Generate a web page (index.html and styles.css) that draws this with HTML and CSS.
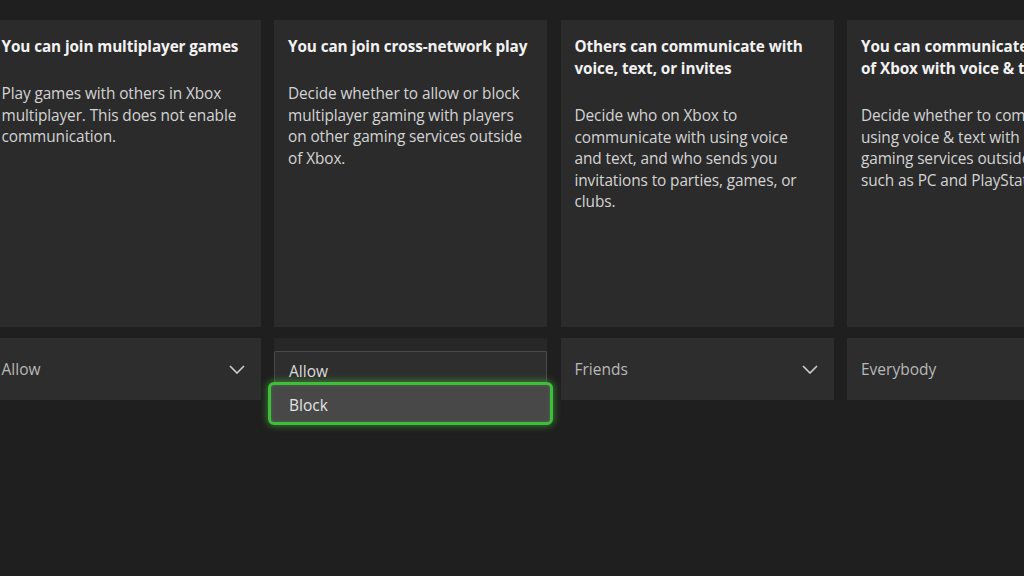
FILE: index.html
```
<!DOCTYPE html>
<html>
<head>
<meta charset="utf-8">
<link rel="stylesheet" href="styles.css">
</head>
<body>
<div class="row">
  <div class="col">
    <div class="card">
      <h2 class="title">You can join multiplayer games</h2>
      <p class="desc">Play games with others in Xbox<br>multiplayer. This does not enable<br>communication.</p>
    </div>
    <div class="select">
      <span class="value">Allow</span>
      <svg class="chev" viewBox="0 0 16 9" width="16" height="9"><path d="M1 1 L8 8 L15 1" fill="none" stroke="#cfcfcf" stroke-width="1.6"/></svg>
    </div>
  </div>
  <div class="col">
    <div class="card">
      <h2 class="title">You can join cross-network play</h2>
      <p class="desc">Decide whether to allow or block<br>multiplayer gaming with players<br>on other gaming services outside<br>of Xbox.</p>
    </div>
    <div class="select open">
      <div class="menu">
        <div class="opt">Allow</div>
        <div class="opt focused">Block</div>
      </div>
    </div>
  </div>
  <div class="col">
    <div class="card">
      <h2 class="title">Others can communicate with<br>voice, text, or invites</h2>
      <p class="desc">Decide who on Xbox to<br>communicate with using voice<br>and text, and who sends you<br>invitations to parties, games, or<br>clubs.</p>
    </div>
    <div class="select">
      <span class="value">Friends</span>
      <svg class="chev" viewBox="0 0 16 9" width="16" height="9"><path d="M1 1 L8 8 L15 1" fill="none" stroke="#cfcfcf" stroke-width="1.6"/></svg>
    </div>
  </div>
  <div class="col">
    <div class="card">
      <h2 class="title">You can communicate outside<br>of Xbox with voice &amp; text</h2>
      <p class="desc">Decide whether to communicate<br>using voice &amp; text with players on<br>gaming services outside of Xbox,<br>such as PC and PlayStation.</p>
    </div>
    <div class="select">
      <span class="value">Everybody</span>
      <svg class="chev" viewBox="0 0 16 9" width="16" height="9"><path d="M1 1 L8 8 L15 1" fill="none" stroke="#cfcfcf" stroke-width="1.6"/></svg>
    </div>
  </div>
</div>
</body>
</html>
```
FILE: styles.css
```
html, body {
  margin: 0;
  padding: 0;
  background: #1f1f1f;
  width: 1024px;
  height: 576px;
  overflow: hidden;
  font-family: "Open Sans", "Noto Sans", sans-serif;
}
.row {
  display: flex;
  gap: 13.5px;
  margin-left: -12.5px;
  padding-top: 20px;
  width: 1200px;
}
.col {
  width: 273px;
  flex: 0 0 273px;
  display: flex;
  flex-direction: column;
  gap: 11px;
}
.card {
  background: #2b2b2b;
  height: 307px;
  box-sizing: border-box;
  padding: 15px 14px 0 14px;
  white-space: nowrap;
}
.title {
  margin: 0;
  font-size: 15.3px;
  font-weight: 700;
  line-height: 22px;
  color: #f2f2f2;
  letter-spacing: -0.1px;
}
.desc {
  margin: 26px 0 0 0;
  font-size: 15.4px;
  line-height: 21.5px;
  color: #d4d4d4;
  letter-spacing: -0.1px;
}
.select {
  height: 62px;
  background: #2d2d2d;
  display: flex;
  align-items: center;
  justify-content: space-between;
  padding: 0 16px 0 14px;
  box-sizing: border-box;
  position: relative;
}
.value {
  font-size: 15.5px;
  color: #b8b8b8;
}
.chev {
  display: block;
}
.select.open {
  background: linear-gradient(#262626, #2b2b2b);
}
.menu {
  position: absolute;
  left: 0;
  right: 0;
  top: 13px;
}
.opt {
  font-size: 15.5px;
  color: #dcdcdc;
  box-sizing: border-box;
  display: flex;
  align-items: center;
}
.opt:first-child {
  height: 32px;
  margin: 0;
  padding: 6px 0 0 14px;
  border: 1px solid #4a4a4a;
  border-bottom: none;
  border-radius: 2px 2px 0 0;
  background: #2e2e2e;
}
.opt.focused {
  margin: -1px -6px 0 -6px;
  height: 43px;
  padding: 3px 0 0 18px;
  border: 3px solid #3fbe3b;
  border-radius: 6px;
  background: #484848;
  box-shadow: 0 0 7px 1px rgba(70, 200, 60, 0.55), inset 0 0 3px rgba(70, 200, 60, 0.4);
  color: #e4e4e4;
}
```
